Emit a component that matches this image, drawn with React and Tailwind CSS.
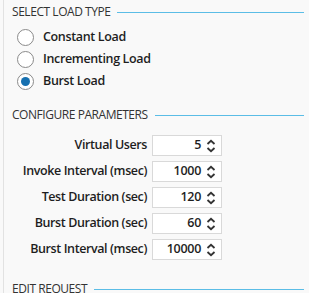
import React from "react";

const font = { fontFamily: '"Open Sans", "Noto Sans", sans-serif' };

function Heading({ children, className = "" }) {
  return (
    <div className={"flex h-[24px] items-center pl-[8px] pr-[5px] " + className}>
      <span className="text-[12px] leading-none tracking-[-0.45px] text-[#333]" style={font}>
        {children}
      </span>
      <div className="ml-[7px] h-px flex-1 bg-[#5bbde6]" />
    </div>
  );
}

function Radio({ label, checked }) {
  return (
    <div className="flex h-[22px] items-center pl-[13px]">
      <div className="flex h-[17px] w-[17px] items-center justify-center rounded-full border border-[#8a8a8a] bg-white">
        {checked && <div className="h-[9px] w-[9px] rounded-full bg-[#1670b0]" />}
      </div>
      <span className="ml-[9px] text-[12.5px] font-semibold leading-none tracking-[-0.35px] text-[#1e1e1e]" style={font}>
        {label}
      </span>
    </div>
  );
}

function Spinner({ label, value }) {
  return (
    <div className="flex h-[21px] items-center">
      <div className="w-[144px] pr-[1px] text-right text-[12.5px] font-semibold leading-none tracking-[-0.4px] text-[#1e1e1e]" style={font}>
        {label}
      </div>
      <div className="ml-[4px] flex h-[21px] w-[70px] items-center border border-[#d9d9d9] bg-white">
        <div className="flex-1 pr-[5px] text-right text-[12.5px] font-semibold leading-none tracking-[-0.3px] text-[#1e1e1e]" style={font}>
          {value}
        </div>
        <svg width="10" height="14" viewBox="0 0 10 14" className="mr-[5px]">
          <path d="M1.5 5 L5 1.8 L8.5 5" fill="none" stroke="#333" strokeWidth="1.8" />
          <path d="M1.5 9 L5 12.2 L8.5 9" fill="none" stroke="#333" strokeWidth="1.8" />
        </svg>
      </div>
    </div>
  );
}

export default function App() {
  return (
    <div className="h-[293px] w-[309px] overflow-hidden bg-[#f9f9f9]">
      <div className="ml-[3px] h-full border-l border-[#e2e2e2]">
        <Heading>SELECT LOAD TYPE</Heading>
        <div className="mt-[2px]">
          <Radio label="Constant Load" />
          <Radio label="Incrementing Load" />
          <Radio label="Burst Load" checked />
        </div>
        <Heading className="mt-[11px]">CONFIGURE PARAMETERS</Heading>
        <div className="mt-[8px] flex flex-col gap-[5px]">
          <Spinner label="Virtual Users" value="5" />
          <Spinner label="Invoke Interval (msec)" value="1000" />
          <Spinner label="Test Duration (sec)" value="120" />
          <Spinner label="Burst Duration (sec)" value="60" />
          <Spinner label="Burst Interval (msec)" value="10000" />
        </div>
        <Heading className="mt-[17px]">EDIT REQUEST</Heading>
      </div>
    </div>
  );
}
